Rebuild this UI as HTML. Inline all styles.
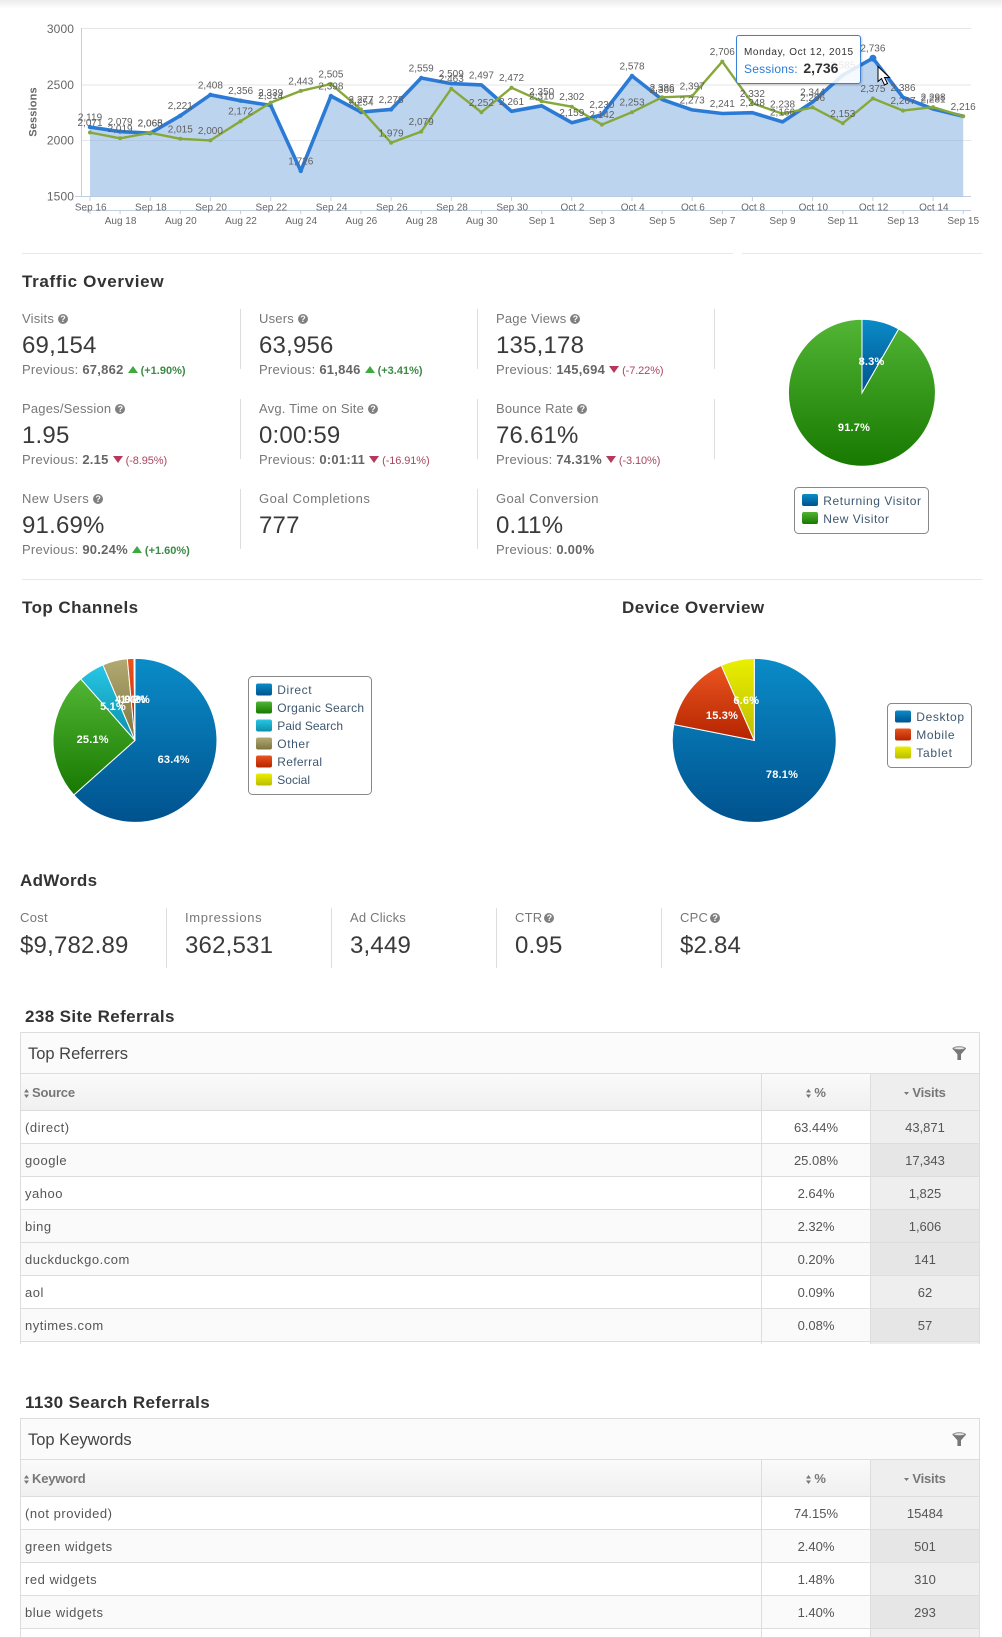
<!DOCTYPE html>
<html lang="en"><head><meta charset="utf-8"><title>Analytics Report</title>
<style>
html,body{margin:0;padding:0;background:#fff}
body{position:relative;width:1002px;height:1636px;overflow:hidden;font-family:"Liberation Sans",sans-serif;color:#555}
.a{position:absolute;white-space:nowrap}
.top{left:0;top:0;width:1002px;height:9px;background:linear-gradient(#ececec,#fff)}
.hr{position:absolute;height:1px;background:#e8e8e8}
.vr{position:absolute;width:1px;height:60px;background:#ddd}
h2{position:absolute;margin:0;font-size:17px;line-height:22px;font-weight:bold;color:#333;white-space:nowrap;letter-spacing:.55px}
.l{position:absolute;white-space:nowrap;font-size:13px;line-height:16px;letter-spacing:.2px;color:#777}
.v{position:absolute;white-space:nowrap;font-size:24px;line-height:30px;letter-spacing:.2px;color:#3a3a3a}
.p{position:absolute;white-space:nowrap;font-size:13px;line-height:16px;letter-spacing:.25px;color:#777}
.p b{color:#666}
.q{display:inline-block;width:10px;height:10px;border-radius:50%;background:#808080;color:#fff;font-size:9px;line-height:10px;text-align:center;font-weight:bold;letter-spacing:0;margin-left:4px;vertical-align:1px}
.u,.d{display:inline-block;width:0;height:0;border-left:5px solid transparent;border-right:5px solid transparent;margin:0 3px 0 4px;vertical-align:1px}
.u{border-bottom:7px solid #3fa83f}
.d{border-top:7px solid #b5395a}
.g{font-size:11px;font-weight:bold;color:#3c8a46;letter-spacing:0}
.r{font-size:11px;color:#a8475f;letter-spacing:-.1px}
svg.c{position:absolute;left:0;top:0}
svg.c text{font-family:"Liberation Sans",sans-serif}
.dl text{font-size:10px;fill:#5f5f5f;text-anchor:middle}
.ax text{font-size:10px;fill:#666;text-anchor:middle}
.pl text{font-size:11px;font-weight:bold;fill:#fff;text-anchor:middle;letter-spacing:.2px}
.lg text{font-size:12px;fill:#3e576f}
.tip{position:absolute;left:736px;top:35px;width:123px;height:47px;background:rgba(255,255,255,.86);border:1px solid #3a82d8;border-radius:3px;box-shadow:1px 1px 2px rgba(0,0,0,.2);z-index:2}
.panel{position:absolute;left:20px;width:958px;border:1px solid #ddd;border-bottom:0;overflow:hidden;background:#fff}
.ph{height:40px;background:#fbfbfb;border-bottom:1px solid #ddd;font-size:16.5px;line-height:42px;padding-left:7px;color:#444;position:relative}
.ph svg{position:absolute;left:931px;top:13px}
table{border-collapse:separate;border-spacing:0;width:958px;table-layout:fixed;font-size:13px;color:#555}
th{height:35px;padding:1px 0 0;background:linear-gradient(#fafafa,#f0f0f0);border-bottom:1px solid #ddd;color:#777;font-weight:bold;text-align:center;letter-spacing:-.2px}
td{height:31px;padding:1px 0 0;border-bottom:1px solid #ddd;text-align:center;background:#fff}
td:first-child{text-align:left;padding-left:4px;letter-spacing:.52px}
th:first-child{text-align:left;padding-left:3px}
th+th,td+td{border-left:1px solid #ddd}
tr.e td{background:#fafafa}
td:last-child{background:#eee!important}
tr.e td:last-child{background:#e6e6e6!important}
th:last-child{background:#eee}
th svg{vertical-align:-1px;margin-right:3px}
</style></head><body>
<div class="a top"></div>

<svg class="c" width="1002" height="1636" viewBox="0 0 1002 1636" xmlns="http://www.w3.org/2000/svg">
<defs>
<linearGradient id="gb" x1="0" y1="0" x2="0" y2="1"><stop offset="0" stop-color="#0a8cc8"/><stop offset="1" stop-color="#00528e"/></linearGradient>
<linearGradient id="gg" x1="0" y1="0" x2="0" y2="1"><stop offset="0" stop-color="#52b535"/><stop offset="1" stop-color="#177900"/></linearGradient>
<linearGradient id="gc" x1="0" y1="0" x2="0" y2="1"><stop offset="0" stop-color="#28c6e6"/><stop offset="1" stop-color="#0a90aa"/></linearGradient>
<linearGradient id="go" x1="0" y1="0" x2="0" y2="1"><stop offset="0" stop-color="#b3aa73"/><stop offset="1" stop-color="#7d7440"/></linearGradient>
<linearGradient id="gr" x1="0" y1="0" x2="0" y2="1"><stop offset="0" stop-color="#ea5520"/><stop offset="1" stop-color="#b52400"/></linearGradient>
<linearGradient id="gy" x1="0" y1="0" x2="0" y2="1"><stop offset="0" stop-color="#eaef00"/><stop offset="1" stop-color="#bdbd00"/></linearGradient>
</defs>

<!-- line chart grid -->
<g stroke="#e6e6e6" stroke-width="1">
<path d="M82 28.5H971M82 85H971M82 140.5H971"/>
</g>
<g stroke="#c0d0e0" stroke-width="1" fill="none">
<path d="M81.5 28V196.5"/>
<path d="M75 196.5H971"/>
<path d="M82 210.5H971"/>
<path d="M90 197v4M150.2 197v4M210.4 197v4M270.7 197v4M330.9 197v4M391.1 197v4M451.3 197v4M511.5 197v4M571.8 197v4M632 197v4M692.2 197v4M752.4 197v4M812.6 197v4M872.9 197v4M933.1 197v4"/>
<path d="M90 211v3M120.1 211v3M180.3 211v3M240.6 211v3M300.8 211v3M361 211v3M421.2 211v3M481.4 211v3M541.7 211v3M601.9 211v3M662.1 211v3M722.3 211v3M782.5 211v3M842.8 211v3M903 211v3M963.2 211v3"/>
</g>

<polygon fill="#7ca9e0" opacity=".5" points="90,196.3 90,127.1 120.1,131.6 150.2,133.2 180.3,115.7 210.4,94.8 240.6,100.7 270.7,105.4 300.8,171 330.9,96 361,112.1 391.1,109.4 421.2,78 451.3,83.6 481.4,84.9 511.5,111.3 541.7,105.8 571.8,122.7 601.9,114.7 632,75.9 662.1,99.5 692.2,109.9 722.3,113.5 752.4,112.7 782.5,121.9 812.6,102 842.8,75.1 872.9,58.2 903,97.3 933.1,109 963.2,116.3 963.2,196.3"/>
<polyline fill="none" stroke="#2b7bd6" stroke-width="3.6" stroke-linejoin="round" points="90,127.1 120.1,131.6 150.2,133.2 180.3,115.7 210.4,94.8 240.6,100.7 270.7,105.4 300.8,171 330.9,96 361,112.1 391.1,109.4 421.2,78 451.3,83.6 481.4,84.9 511.5,111.3 541.7,105.8 571.8,122.7 601.9,114.7 632,75.9 662.1,99.5 692.2,109.9 722.3,113.5 752.4,112.7 782.5,121.9 812.6,102 842.8,75.1 872.9,58.2 903,97.3 933.1,109 963.2,116.3"/>
<g fill="#2b7bd6">
<circle cx="90" cy="127.1" r="2.2"/><circle cx="120.1" cy="131.6" r="2.2"/><circle cx="150.2" cy="133.2" r="2.2"/><circle cx="180.3" cy="115.7" r="2.2"/><circle cx="210.4" cy="94.8" r="2.2"/><circle cx="240.6" cy="100.7" r="2.2"/><circle cx="270.7" cy="105.4" r="2.2"/><circle cx="300.8" cy="171" r="2.2"/><circle cx="330.9" cy="96" r="2.2"/><circle cx="361" cy="112.1" r="2.2"/><circle cx="391.1" cy="109.4" r="2.2"/><circle cx="421.2" cy="78" r="2.2"/><circle cx="632" cy="75.9" r="2.2"/><circle cx="872.9" cy="58.2" r="3.5"/>
</g>
<polyline fill="none" stroke="#86a83a" stroke-width="2.4" stroke-linejoin="round" points="90,132.5 120.1,138.3 150.2,132.8 180.3,138.8 210.4,140.4 240.6,121.2 270.7,102.6 300.8,90.9 330.9,84 361,109.5 391.1,142.8 421.2,131.6 451.3,88.7 481.4,112.3 511.5,87.7 541.7,101.3 571.8,106.7 601.9,124.6 632,112.2 662.1,97.3 692.2,96.1 722.3,61.6 752.4,103.3 782.5,113.8 812.6,107.4 842.8,123.3 872.9,98.5 903,110.6 933.1,107.1 963.2,116.3"/>
<g fill="#86a83a">
<circle cx="90" cy="132.5" r="2"/><circle cx="120.1" cy="138.3" r="2"/><circle cx="150.2" cy="132.8" r="2"/><circle cx="180.3" cy="138.8" r="2"/><circle cx="210.4" cy="140.4" r="2"/><circle cx="240.6" cy="121.2" r="2"/><circle cx="270.7" cy="102.6" r="2"/><circle cx="300.8" cy="90.9" r="2"/><circle cx="330.9" cy="84" r="2"/><circle cx="361" cy="109.5" r="2"/><circle cx="391.1" cy="142.8" r="2"/><circle cx="421.2" cy="131.6" r="2"/><circle cx="451.3" cy="88.7" r="2"/><circle cx="481.4" cy="112.3" r="2"/><circle cx="511.5" cy="87.7" r="2"/><circle cx="541.7" cy="101.3" r="2"/><circle cx="571.8" cy="106.7" r="2"/><circle cx="601.9" cy="124.6" r="2"/><circle cx="632" cy="112.2" r="2"/><circle cx="662.1" cy="97.3" r="2"/><circle cx="692.2" cy="96.1" r="2"/><circle cx="722.3" cy="61.6" r="2"/><circle cx="752.4" cy="103.3" r="2"/><circle cx="782.5" cy="113.8" r="2"/><circle cx="812.6" cy="107.4" r="2"/><circle cx="842.8" cy="123.3" r="2"/><circle cx="872.9" cy="98.5" r="2"/><circle cx="903" cy="110.6" r="2"/><circle cx="933.1" cy="107.1" r="2"/><circle cx="963.2" cy="116.3" r="2"/>
</g>

<!-- data labels -->
<g class="dl">
<text x="90" y="120.6">2,119</text><text x="120.1" y="125.1">2,079</text><text x="150.2" y="126.7">2,065</text><text x="180.3" y="109.2">2,221</text><text x="210.4" y="88.3">2,408</text><text x="240.6" y="94.2">2,356</text><text x="270.7" y="98.9">2,314</text><text x="300.8" y="164.5">1,726</text><text x="330.9" y="89.5">2,398</text><text x="361" y="105.6">2,254</text><text x="391.1" y="102.9">2,278</text><text x="421.2" y="71.5">2,559</text><text x="451.3" y="77.1">2,509</text><text x="481.4" y="78.4">2,497</text><text x="511.5" y="104.8">2,261</text><text x="541.7" y="99.3">2,310</text><text x="571.8" y="116.2">2,159</text><text x="601.9" y="108.2">2,230</text><text x="632" y="69.4">2,578</text><text x="662.1" y="93">2,366</text><text x="692.2" y="103.4">2,273</text><text x="722.3" y="107">2,241</text><text x="752.4" y="106.2">2,248</text><text x="782.5" y="115.4">2,166</text><text x="812.6" y="95.5">2,344</text><text x="842.8" y="68.6">2,585</text><text x="872.9" y="51.7">2,736</text><text x="903" y="90.8">2,386</text><text x="933.1" y="102.5">2,281</text><text x="963.2" y="109.8">2,216</text>
<text x="90" y="126">2,071</text><text x="120.1" y="131.8">2,019</text><text x="150.2" y="126.3">2,068</text><text x="180.3" y="132.3">2,015</text><text x="210.4" y="133.9">2,000</text><text x="240.6" y="114.7">2,172</text><text x="270.7" y="96.1">2,339</text><text x="300.8" y="84.4">2,443</text><text x="330.9" y="77.5">2,505</text><text x="361" y="103">2,277</text><text x="391.1" y="136.3">1,979</text><text x="421.2" y="125.1">2,079</text><text x="451.3" y="82.2">2,463</text><text x="481.4" y="105.8">2,252</text><text x="511.5" y="81.2">2,472</text><text x="541.7" y="94.8">2,350</text><text x="571.8" y="100.2">2,302</text><text x="601.9" y="118.1">2,142</text><text x="632" y="105.7">2,253</text><text x="662.1" y="90.8">2,386</text><text x="692.2" y="89.6">2,397</text><text x="722.3" y="55.1">2,706</text><text x="752.4" y="96.8">2,332</text><text x="782.5" y="107.3">2,238</text><text x="812.6" y="100.9">2,296</text><text x="842.8" y="116.8">2,153</text><text x="872.9" y="92">2,375</text><text x="903" y="104.1">2,267</text><text x="933.1" y="100.6">2,298</text>
</g>

<!-- axes labels -->
<g class="ax">
<text x="90.7" y="210.5">Sep 16</text><text x="150.9" y="210.5">Sep 18</text><text x="211.1" y="210.5">Sep 20</text><text x="271.4" y="210.5">Sep 22</text><text x="331.6" y="210.5">Sep 24</text><text x="391.8" y="210.5">Sep 26</text><text x="452" y="210.5">Sep 28</text><text x="512.2" y="210.5">Sep 30</text><text x="572.5" y="210.5">Oct 2</text><text x="632.7" y="210.5">Oct 4</text><text x="692.9" y="210.5">Oct 6</text><text x="753.1" y="210.5">Oct 8</text><text x="813.3" y="210.5">Oct 10</text><text x="873.6" y="210.5">Oct 12</text><text x="933.8" y="210.5">Oct 14</text>
<text x="120.6" y="224">Aug 18</text><text x="180.8" y="224">Aug 20</text><text x="241" y="224">Aug 22</text><text x="301.2" y="224">Aug 24</text><text x="361.4" y="224">Aug 26</text><text x="421.6" y="224">Aug 28</text><text x="481.8" y="224">Aug 30</text><text x="541.7" y="224">Sep 1</text><text x="601.9" y="224">Sep 3</text><text x="662.1" y="224">Sep 5</text><text x="722.3" y="224">Sep 7</text><text x="782.5" y="224">Sep 9</text><text x="842.8" y="224">Sep 11</text><text x="903" y="224">Sep 13</text><text x="963.2" y="224">Sep 15</text>
</g>
<g font-size="12" fill="#666" text-anchor="end" letter-spacing=".1">
<text x="74" y="33">3000</text><text x="74" y="89">2500</text><text x="74" y="144.5">2000</text><text x="74" y="200.5">1500</text>
</g>
<text transform="translate(36.5 112) rotate(-90)" font-size="11" font-weight="bold" fill="#666" text-anchor="middle" letter-spacing=".15">Sessions</text>

<!-- visitor pie -->
<path d="M862 392.7L898.6 329A73.5 73.5 0 1 1 862 319.2Z" fill="url(#gg)" stroke="#fff" stroke-width="1"/>
<path d="M862 392.7L862 319.2A73.5 73.5 0 0 1 898.6 329Z" fill="url(#gb)" stroke="#fff" stroke-width="1"/>
<g class="pl"><text x="871.5" y="365">8.3%</text><text x="854" y="431">91.7%</text></g>
<rect x="794.5" y="487.5" width="134" height="46" rx="4" fill="#fff" stroke="#888"/>
<rect x="802" y="494" width="16" height="12" rx="2" fill="url(#gb)"/>
<rect x="802" y="512" width="16" height="12" rx="2" fill="url(#gg)"/>
<g class="lg"><text x="823.3" y="505" textLength="97.7">Returning Visitor</text><text x="823.3" y="523" textLength="65.7">New Visitor</text></g>

<!-- channels pie -->
<path d="M135 740.4L135 658.4A82 82 0 1 1 73.8 795Z" fill="url(#gb)" stroke="#fff"/>
<path d="M135 740.4L73.8 795A82 82 0 0 1 80.8 678.9Z" fill="url(#gg)" stroke="#fff"/>
<path d="M135 740.4L80.8 678.9A82 82 0 0 1 102.9 664.9Z" fill="url(#gc)" stroke="#fff"/>
<path d="M135 740.4L102.9 664.9A82 82 0 0 1 127.3 658.8Z" fill="url(#go)" stroke="#fff"/>
<path d="M135 740.4L127.3 658.8A82 82 0 0 1 134 658.4Z" fill="url(#gr)" stroke="#fff"/>
<path d="M135 740.4L134 658.4A82 82 0 0 1 135 658.4Z" fill="url(#gy)" stroke="#fff"/>
<g class="pl"><text x="173.7" y="763">63.4%</text><text x="92.7" y="743">25.1%</text><text x="113" y="710">5.1%</text><text x="128" y="703">4.9%</text><text x="133" y="703">1.4%</text><text x="137" y="703">0.2%</text></g>
<rect x="248.5" y="676.5" width="123" height="118" rx="4" fill="#fff" stroke="#888"/>
<rect x="256" y="683.5" width="16" height="12" rx="2" fill="url(#gb)"/>
<rect x="256" y="701.5" width="16" height="12" rx="2" fill="url(#gg)"/>
<rect x="256" y="719.5" width="16" height="12" rx="2" fill="url(#gc)"/>
<rect x="256" y="737.5" width="16" height="12" rx="2" fill="url(#go)"/>
<rect x="256" y="755.5" width="16" height="12" rx="2" fill="url(#gr)"/>
<rect x="256" y="773.5" width="16" height="12" rx="2" fill="url(#gy)"/>
<g class="lg"><text x="277.3" y="694" textLength="34.3">Direct</text><text x="277.3" y="712" textLength="86.7">Organic Search</text><text x="277.3" y="730" textLength="65.7">Paid Search</text><text x="277.3" y="748" textLength="32.3">Other</text><text x="277.3" y="766" textLength="44.7">Referral</text><text x="277.3" y="784" textLength="32.7">Social</text></g>

<!-- device pie -->
<path d="M754.3 740.4L754.3 658.4A82 82 0 1 1 673.8 724.5Z" fill="url(#gb)" stroke="#fff"/>
<path d="M754.3 740.4L673.8 724.5A82 82 0 0 1 721.3 665.4Z" fill="url(#gr)" stroke="#fff"/>
<path d="M754.3 740.4L721.3 665.4A82 82 0 0 1 754.3 658.4Z" fill="url(#gy)" stroke="#fff"/>
<g class="pl"><text x="782" y="778">78.1%</text><text x="722" y="719">15.3%</text><text x="746.3" y="704">6.6%</text></g>
<rect x="887.5" y="703.5" width="84" height="64" rx="4" fill="#fff" stroke="#888"/>
<rect x="895" y="710.5" width="16" height="12" rx="2" fill="url(#gb)"/>
<rect x="895" y="728.5" width="16" height="12" rx="2" fill="url(#gr)"/>
<rect x="895" y="746.5" width="16" height="12" rx="2" fill="url(#gy)"/>
<g class="lg"><text x="916.3" y="721" textLength="47.7">Desktop</text><text x="916.3" y="739" textLength="38.3">Mobile</text><text x="916.3" y="757" textLength="35.7">Tablet</text></g>
</svg>

<div class="tip">
<div class="a" style="left:7px;top:10px;font-size:10px;line-height:14px;letter-spacing:.6px;color:#333">Monday, Oct 12, 2015</div>
<div class="a" style="left:7px;top:23px;font-size:12px;line-height:18px;letter-spacing:.2px;color:#2b7bd6">Sessions: <b style="font-size:14px;color:#333;letter-spacing:0;margin-left:2px">2,736</b></div>
</div>
<svg style="position:absolute;left:870px;top:60px;z-index:3" width="30" height="30" viewBox="870 60 30 30"><path d="M878 66.5V81.5L881.5 78.5L884.5 85L887.5 83.5L884.5 77.5H889.5Z" fill="#fff" stroke="#000" stroke-width="1"/></svg>

<div class="hr" style="left:22px;top:253px;width:711px"></div>
<div class="hr" style="left:742px;top:253px;width:240px"></div>

<h2 style="left:22px;top:271px;letter-spacing:.68px">Traffic Overview</h2>

<div class="vr" style="left:240px;top:309px"></div><div class="vr" style="left:477px;top:309px"></div><div class="vr" style="left:714px;top:309px"></div>
<div class="vr" style="left:240px;top:399px"></div><div class="vr" style="left:477px;top:399px"></div><div class="vr" style="left:714px;top:399px"></div>
<div class="vr" style="left:240px;top:489px"></div><div class="vr" style="left:477px;top:489px"></div>

<div class="l" style="left:22px;top:311px">Visits<span class="q">?</span></div>
<div class="v" style="left:22px;top:331px">69,154</div>
<div class="p" style="left:22px;top:362px">Previous: <b>67,862</b><i class="u"></i><span class="g">(+1.90%)</span></div>

<div class="l" style="left:259px;top:311px">Users<span class="q">?</span></div>
<div class="v" style="left:259px;top:331px">63,956</div>
<div class="p" style="left:259px;top:362px">Previous: <b>61,846</b><i class="u"></i><span class="g">(+3.41%)</span></div>

<div class="l" style="left:496px;top:311px">Page Views<span class="q">?</span></div>
<div class="v" style="left:496px;top:331px">135,178</div>
<div class="p" style="left:496px;top:362px">Previous: <b>145,694</b><i class="d"></i><span class="r">(-7.22%)</span></div>

<div class="l" style="left:22px;top:401px">Pages/Session<span class="q">?</span></div>
<div class="v" style="left:22px;top:421px">1.95</div>
<div class="p" style="left:22px;top:452px">Previous: <b>2.15</b><i class="d"></i><span class="r">(-8.95%)</span></div>

<div class="l" style="left:259px;top:401px">Avg. Time on Site<span class="q">?</span></div>
<div class="v" style="left:259px;top:421px">0:00:59</div>
<div class="p" style="left:259px;top:452px">Previous: <b>0:01:11</b><i class="d"></i><span class="r">(-16.91%)</span></div>

<div class="l" style="left:496px;top:401px">Bounce Rate<span class="q">?</span></div>
<div class="v" style="left:496px;top:421px">76.61%</div>
<div class="p" style="left:496px;top:452px">Previous: <b>74.31%</b><i class="d"></i><span class="r">(-3.10%)</span></div>

<div class="l" style="left:22px;top:491px;letter-spacing:.4px">New Users<span class="q">?</span></div>
<div class="v" style="left:22px;top:511px">91.69%</div>
<div class="p" style="left:22px;top:542px">Previous: <b>90.24%</b><i class="u"></i><span class="g">(+1.60%)</span></div>

<div class="l" style="left:259px;top:491px;letter-spacing:.5px">Goal Completions</div>
<div class="v" style="left:259px;top:511px">777</div>

<div class="l" style="left:496px;top:491px;letter-spacing:.4px">Goal Conversion</div>
<div class="v" style="left:496px;top:511px">0.11%</div>
<div class="p" style="left:496px;top:542px">Previous: <b>0.00%</b></div>

<div class="hr" style="left:22px;top:579px;width:960px"></div>

<h2 style="left:22px;top:597px;letter-spacing:.45px">Top Channels</h2>
<h2 style="left:622px;top:597px;letter-spacing:.5px">Device Overview</h2>

<h2 style="left:20px;top:870px;letter-spacing:.3px">AdWords</h2>
<div class="vr" style="left:166px;top:908px"></div><div class="vr" style="left:331px;top:908px"></div><div class="vr" style="left:496px;top:908px"></div><div class="vr" style="left:661px;top:908px"></div>
<div class="l" style="left:20px;top:910px;letter-spacing:.3px">Cost</div><div class="v" style="left:20px;top:931px">$9,782.89</div>
<div class="l" style="left:185px;top:910px;letter-spacing:.65px">Impressions</div><div class="v" style="left:185px;top:931px">362,531</div>
<div class="l" style="left:350px;top:910px">Ad Clicks</div><div class="v" style="left:350px;top:931px">3,449</div>
<div class="l" style="left:515px;top:910px">CTR<span class="q" style="margin-left:2px">?</span></div><div class="v" style="left:515px;top:931px">0.95</div>
<div class="l" style="left:680px;top:910px">CPC<span class="q" style="margin-left:2px">?</span></div><div class="v" style="left:680px;top:931px">$2.84</div>

<h2 style="left:25px;top:1006px;letter-spacing:.4px">238 Site Referrals</h2>
<div class="panel" style="top:1032px;height:311px">
<div class="ph">Top Referrers<svg width="15" height="15" viewBox="0 0 15 15"><ellipse cx="7.2" cy="2.5" rx="6.8" ry="2.2" fill="#888"/><path d="M.4 2.6C2 4.2 12.4 4.2 14 2.6L9 8.2V14H5.4V8.2Z" fill="#777"/><ellipse cx="7.2" cy="2.2" rx="5" ry="1" fill="#e8e8e8"/></svg></div>
<table><colgroup><col style="width:740px"><col style="width:109px"><col style="width:109px"></colgroup>
<thead><tr><th><svg width="5" height="9" viewBox="0 0 5 9"><path d="M2.5 0L5 3.5H0ZM2.5 9L0 5.5H5Z" fill="#777"/></svg>Source</th><th><svg width="5" height="9" viewBox="0 0 5 9"><path d="M2.5 0L5 3.5H0ZM2.5 9L0 5.5H5Z" fill="#777"/></svg>%</th><th><svg width="5" height="3" viewBox="0 0 5 3" style="vertical-align:2px"><path d="M0 0H5L2.5 3Z" fill="#777"/></svg>Visits</th></tr></thead>
<tbody>
<tr><td>(direct)</td><td>63.44%</td><td>43,871</td></tr>
<tr class="e"><td>google</td><td>25.08%</td><td>17,343</td></tr>
<tr><td>yahoo</td><td>2.64%</td><td>1,825</td></tr>
<tr class="e"><td>bing</td><td>2.32%</td><td>1,606</td></tr>
<tr class="e"><td>duckduckgo.com</td><td>0.20%</td><td>141</td></tr>
<tr><td>aol</td><td>0.09%</td><td>62</td></tr>
<tr class="e"><td>nytimes.com</td><td>0.08%</td><td>57</td></tr>
<tr><td>&nbsp;</td><td>&nbsp;</td><td>&nbsp;</td></tr>
</tbody></table></div>

<h2 style="left:25px;top:1392px;letter-spacing:.4px">1130 Search Referrals</h2>
<div class="panel" style="top:1418px;height:218px">
<div class="ph">Top Keywords<svg width="15" height="15" viewBox="0 0 15 15"><ellipse cx="7.2" cy="2.5" rx="6.8" ry="2.2" fill="#888"/><path d="M.4 2.6C2 4.2 12.4 4.2 14 2.6L9 8.2V14H5.4V8.2Z" fill="#777"/><ellipse cx="7.2" cy="2.2" rx="5" ry="1" fill="#e8e8e8"/></svg></div>
<table><colgroup><col style="width:740px"><col style="width:109px"><col style="width:109px"></colgroup>
<thead><tr><th><svg width="5" height="9" viewBox="0 0 5 9"><path d="M2.5 0L5 3.5H0ZM2.5 9L0 5.5H5Z" fill="#777"/></svg>Keyword</th><th><svg width="5" height="9" viewBox="0 0 5 9"><path d="M2.5 0L5 3.5H0ZM2.5 9L0 5.5H5Z" fill="#777"/></svg>%</th><th><svg width="5" height="3" viewBox="0 0 5 3" style="vertical-align:2px"><path d="M0 0H5L2.5 3Z" fill="#777"/></svg>Visits</th></tr></thead>
<tbody>
<tr><td>(not provided)</td><td>74.15%</td><td>15484</td></tr>
<tr class="e"><td>green widgets</td><td>2.40%</td><td>501</td></tr>
<tr><td>red widgets</td><td>1.48%</td><td>310</td></tr>
<tr class="e"><td>blue widgets</td><td>1.40%</td><td>293</td></tr>
<tr><td>&nbsp;</td><td>&nbsp;</td><td>&nbsp;</td></tr>
</tbody></table></div>
</body></html>
